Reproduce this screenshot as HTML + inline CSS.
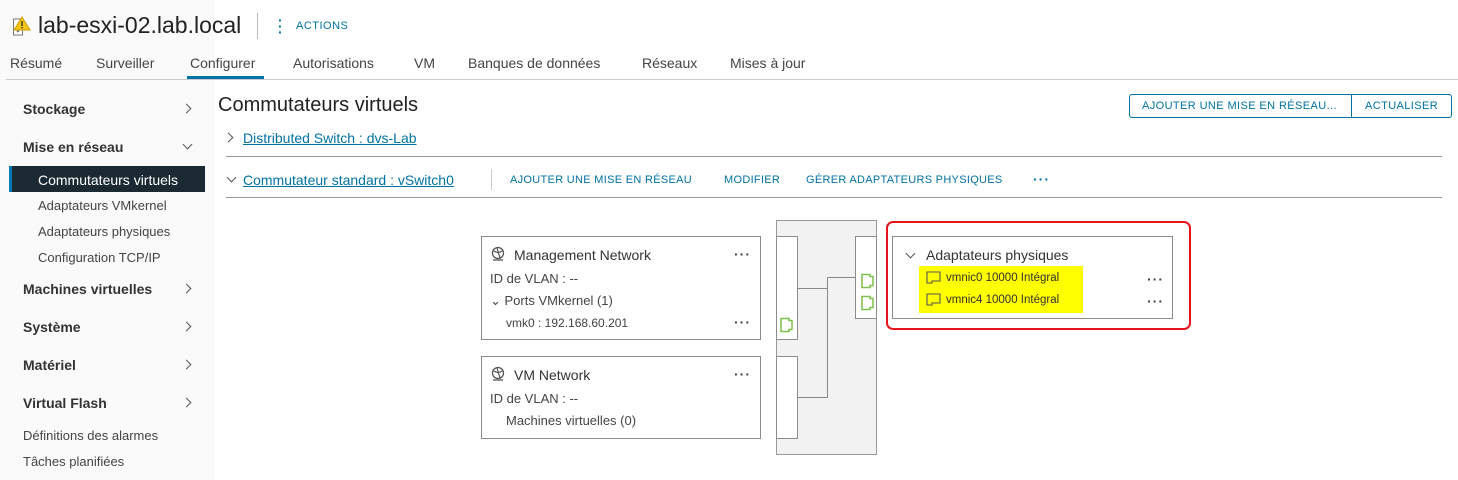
<!DOCTYPE html>
<html><head><meta charset="utf-8"><style>
*{margin:0;padding:0;box-sizing:border-box}
body{width:1458px;height:480px;background:#fff;font-family:"Liberation Sans",sans-serif;color:#313131;position:relative;overflow:hidden}
.a{position:absolute;white-space:nowrap}
.b{position:absolute;border:1px solid #8c8c8c;background:#fff}
.blue{color:#0072a3}
.link{color:#0072a3;text-decoration:underline;font-size:14px}
.dots{position:absolute;font-size:14px;letter-spacing:1px;color:#444;font-weight:bold}
.side{font-size:14px;font-weight:bold;color:#333}
.chev{position:absolute;width:7px;height:7px;border-right:1.5px solid #555;border-bottom:1.5px solid #555}
.r{transform:rotate(-45deg)}.d{transform:rotate(45deg)}
.sm{font-size:13px;color:#444}
</style></head><body>
<div class="a" style="left:0;top:0;width:215px;height:480px;background:#fafafa"></div>
<svg class="a" style="left:12px;top:15px" width="20" height="22"><rect x="1.5" y="4" width="9" height="16" fill="#fff" stroke="#777"/><circle cx="6" cy="16" r="1.3" fill="#777"/><path d="M10 2 L18 15 L2 15 Z" fill="#f5c518" stroke="#c8a000"/><rect x="9.3" y="6" width="1.4" height="5" fill="#333"/><rect x="9.3" y="12" width="1.4" height="1.4" fill="#333"/></svg>
<div class="a" style="left:38px;top:12px;font-size:23px;color:#222">lab-esxi-02.lab.local</div>
<div class="a" style="left:257px;top:13px;width:1px;height:26px;background:#bbb"></div>
<div class="a blue" style="left:278px;top:17px;font-size:14px;font-weight:bold;line-height:6px">·<br>·<br>·</div>
<div class="a blue" style="left:296px;top:20px;font-size:11px;letter-spacing:.5px">ACTIONS</div>
<div class="a" style="left:10px;top:55px;font-size:14px;color:#444">Résumé</div>
<div class="a" style="left:96px;top:55px;font-size:14px;color:#444">Surveiller</div>
<div class="a" style="left:190px;top:55px;font-size:14px;color:#444">Configurer</div>
<div class="a" style="left:293px;top:55px;font-size:14px;color:#444">Autorisations</div>
<div class="a" style="left:414px;top:55px;font-size:14px;color:#444">VM</div>
<div class="a" style="left:468px;top:55px;font-size:14px;color:#444">Banques de données</div>
<div class="a" style="left:642px;top:55px;font-size:14px;color:#444">Réseaux</div>
<div class="a" style="left:730px;top:55px;font-size:14px;color:#444">Mises à jour</div>
<div class="a" style="left:6px;top:79px;width:1452px;height:1px;background:#ccc"></div>
<div class="a" style="left:187px;top:76px;width:77px;height:3px;background:#0072a3"></div>

<div class="a side" style="left:23px;top:101px">Stockage</div><div class="chev r" style="left:183px;top:105px"></div>
<div class="a side" style="left:23px;top:139px">Mise en réseau</div><div class="chev d" style="left:184px;top:141px"></div>
<div class="a" style="left:9px;top:166px;width:196px;height:26px;background:#1b2a32;border-left:3px solid #0079b8"></div>
<div class="a" style="left:38px;top:172px;font-size:14px;color:#fff">Commutateurs virtuels</div>
<div class="a sm" style="left:38px;top:198px">Adaptateurs VMkernel</div>
<div class="a sm" style="left:38px;top:224px">Adaptateurs physiques</div>
<div class="a sm" style="left:38px;top:250px">Configuration TCP/IP</div>
<div class="a side" style="left:23px;top:281px">Machines virtuelles</div><div class="chev r" style="left:183px;top:285px"></div>
<div class="a side" style="left:23px;top:319px">Système</div><div class="chev r" style="left:183px;top:323px"></div>
<div class="a side" style="left:23px;top:357px">Matériel</div><div class="chev r" style="left:183px;top:361px"></div>
<div class="a side" style="left:23px;top:395px">Virtual Flash</div><div class="chev r" style="left:183px;top:399px"></div>
<div class="a sm" style="left:23px;top:428px">Définitions des alarmes</div>
<div class="a sm" style="left:23px;top:454px">Tâches planifiées</div>

<div class="a" style="left:218px;top:94px;font-size:20px;color:#222">Commutateurs virtuels</div>
<div class="a blue" style="left:1129px;top:94px;width:323px;height:24px;border:1px solid #0072a3;border-radius:3px;font-size:11px;letter-spacing:.4px">
<span class="a" style="left:12px;top:5px">AJOUTER UNE MISE EN RÉSEAU...</span>
<span class="a" style="left:221px;top:-1px;width:1px;height:24px;background:#0072a3"></span>
<span class="a" style="left:235px;top:5px">ACTUALISER</span></div>

<div class="chev r" style="left:225px;top:134px"></div>
<div class="a link" style="left:243px;top:130px">Distributed Switch : dvs-Lab </div>
<div class="a" style="left:226px;top:156px;width:1216px;height:1px;background:#999"></div>
<div class="chev d" style="left:228px;top:174px"></div>
<div class="a link" style="left:243px;top:172px">Commutateur standard : vSwitch0 </div>
<div class="a" style="left:491px;top:169px;width:1px;height:21px;background:#ccc"></div>
<div class="a blue" style="left:510px;top:174px;font-size:11px;letter-spacing:.3px">AJOUTER UNE MISE EN RÉSEAU</div>
<div class="a blue" style="left:724px;top:174px;font-size:11px;letter-spacing:.3px">MODIFIER</div>
<div class="a blue" style="left:806px;top:174px;font-size:11px;letter-spacing:.3px">GÉRER ADAPTATEURS PHYSIQUES</div>
<div class="a blue" style="left:1033px;top:171px;font-size:14px;font-weight:bold;letter-spacing:1px">···</div>
<div class="a" style="left:226px;top:197px;width:1216px;height:1px;background:#999"></div>

<div class="a" style="left:776px;top:220px;width:101px;height:235px;background:#f2f2f2;border:1px solid #999"></div>
<div class="b" style="left:776px;top:236px;width:22px;height:104px"></div>
<div class="b" style="left:776px;top:356px;width:22px;height:83px"></div>
<div class="b" style="left:855px;top:236px;width:22px;height:83px"></div>
<svg class="a" style="left:776px;top:220px" width="101" height="235">
<path d="M21 68.5H51.5M51.5 57.5V177.5H21M51.5 57.5H79" fill="none" stroke="#888" stroke-width="1"/>
<g fill="none" stroke="#7cbf4a" stroke-width="1.5">
<path d="M5 98.5H13V100.5H16V109.5H13V111.5H5Z"/>
<path d="M86 54.5H94V56.5H97V65.5H94V67.5H86Z"/>
<path d="M86 76.5H94V78.5H97V87.5H94V89.5H86Z"/></g></svg>

<div class="b" style="left:481px;top:236px;width:280px;height:104px"></div>
<svg class="a" style="left:491px;top:246px" width="14" height="16"><circle cx="7" cy="7" r="5.5" fill="none" stroke="#555" stroke-width="1.3"/><path d="M3 5Q7 8 11 5M6 2L9 12M2 14H12" fill="none" stroke="#555" stroke-width="1.2"/></svg>
<div class="a" style="left:514px;top:247px;font-size:14px;color:#333">Management Network</div>
<div class="dots" style="left:734px;top:246px">···</div>
<div class="a sm" style="left:490px;top:271px">ID de VLAN : --</div>
<div class="a sm" style="left:490px;top:293px">⌄ Ports VMkernel (1)</div>
<div class="a" style="left:506px;top:316px;font-size:12px;color:#444">vmk0 : 192.168.60.201</div>
<div class="dots" style="left:734px;top:314px">···</div>

<div class="b" style="left:481px;top:356px;width:280px;height:83px"></div>
<svg class="a" style="left:491px;top:366px" width="14" height="16"><circle cx="7" cy="7" r="5.5" fill="none" stroke="#555" stroke-width="1.3"/><path d="M3 5Q7 8 11 5M6 2L9 12M2 14H12" fill="none" stroke="#555" stroke-width="1.2"/></svg>
<div class="a" style="left:514px;top:367px;font-size:14px;color:#333">VM Network</div>
<div class="dots" style="left:734px;top:366px">···</div>
<div class="a sm" style="left:490px;top:391px">ID de VLAN : --</div>
<div class="a sm" style="left:506px;top:413px">Machines virtuelles (0)</div>

<div class="a" style="left:886px;top:221px;width:305px;height:109px;border:2px solid #e8141c;border-radius:7px"></div>
<div class="b" style="left:892px;top:236px;width:281px;height:83px"></div>
<div class="chev d" style="left:907px;top:250px"></div>
<div class="a" style="left:926px;top:247px;font-size:14px;color:#333">Adaptateurs physiques</div>
<div class="a" style="left:919px;top:266px;width:164px;height:47px;background:#ffff00"></div>
<svg class="a" style="left:926px;top:271px" width="16" height="38"><path d="M1 1H14V10H6V12H1Z M1 23H14V32H6V34H1Z" fill="none" stroke="#555" stroke-width="1.1"/></svg>
<div class="a" style="left:946px;top:272px;font-size:11.5px;color:#333">vmnic0 10000 Intégral</div>
<div class="a" style="left:946px;top:294px;font-size:11.5px;color:#333">vmnic4 10000 Intégral</div>
<div class="dots" style="left:1147px;top:271px">···</div>
<div class="dots" style="left:1147px;top:293px">···</div>
</body></html>
